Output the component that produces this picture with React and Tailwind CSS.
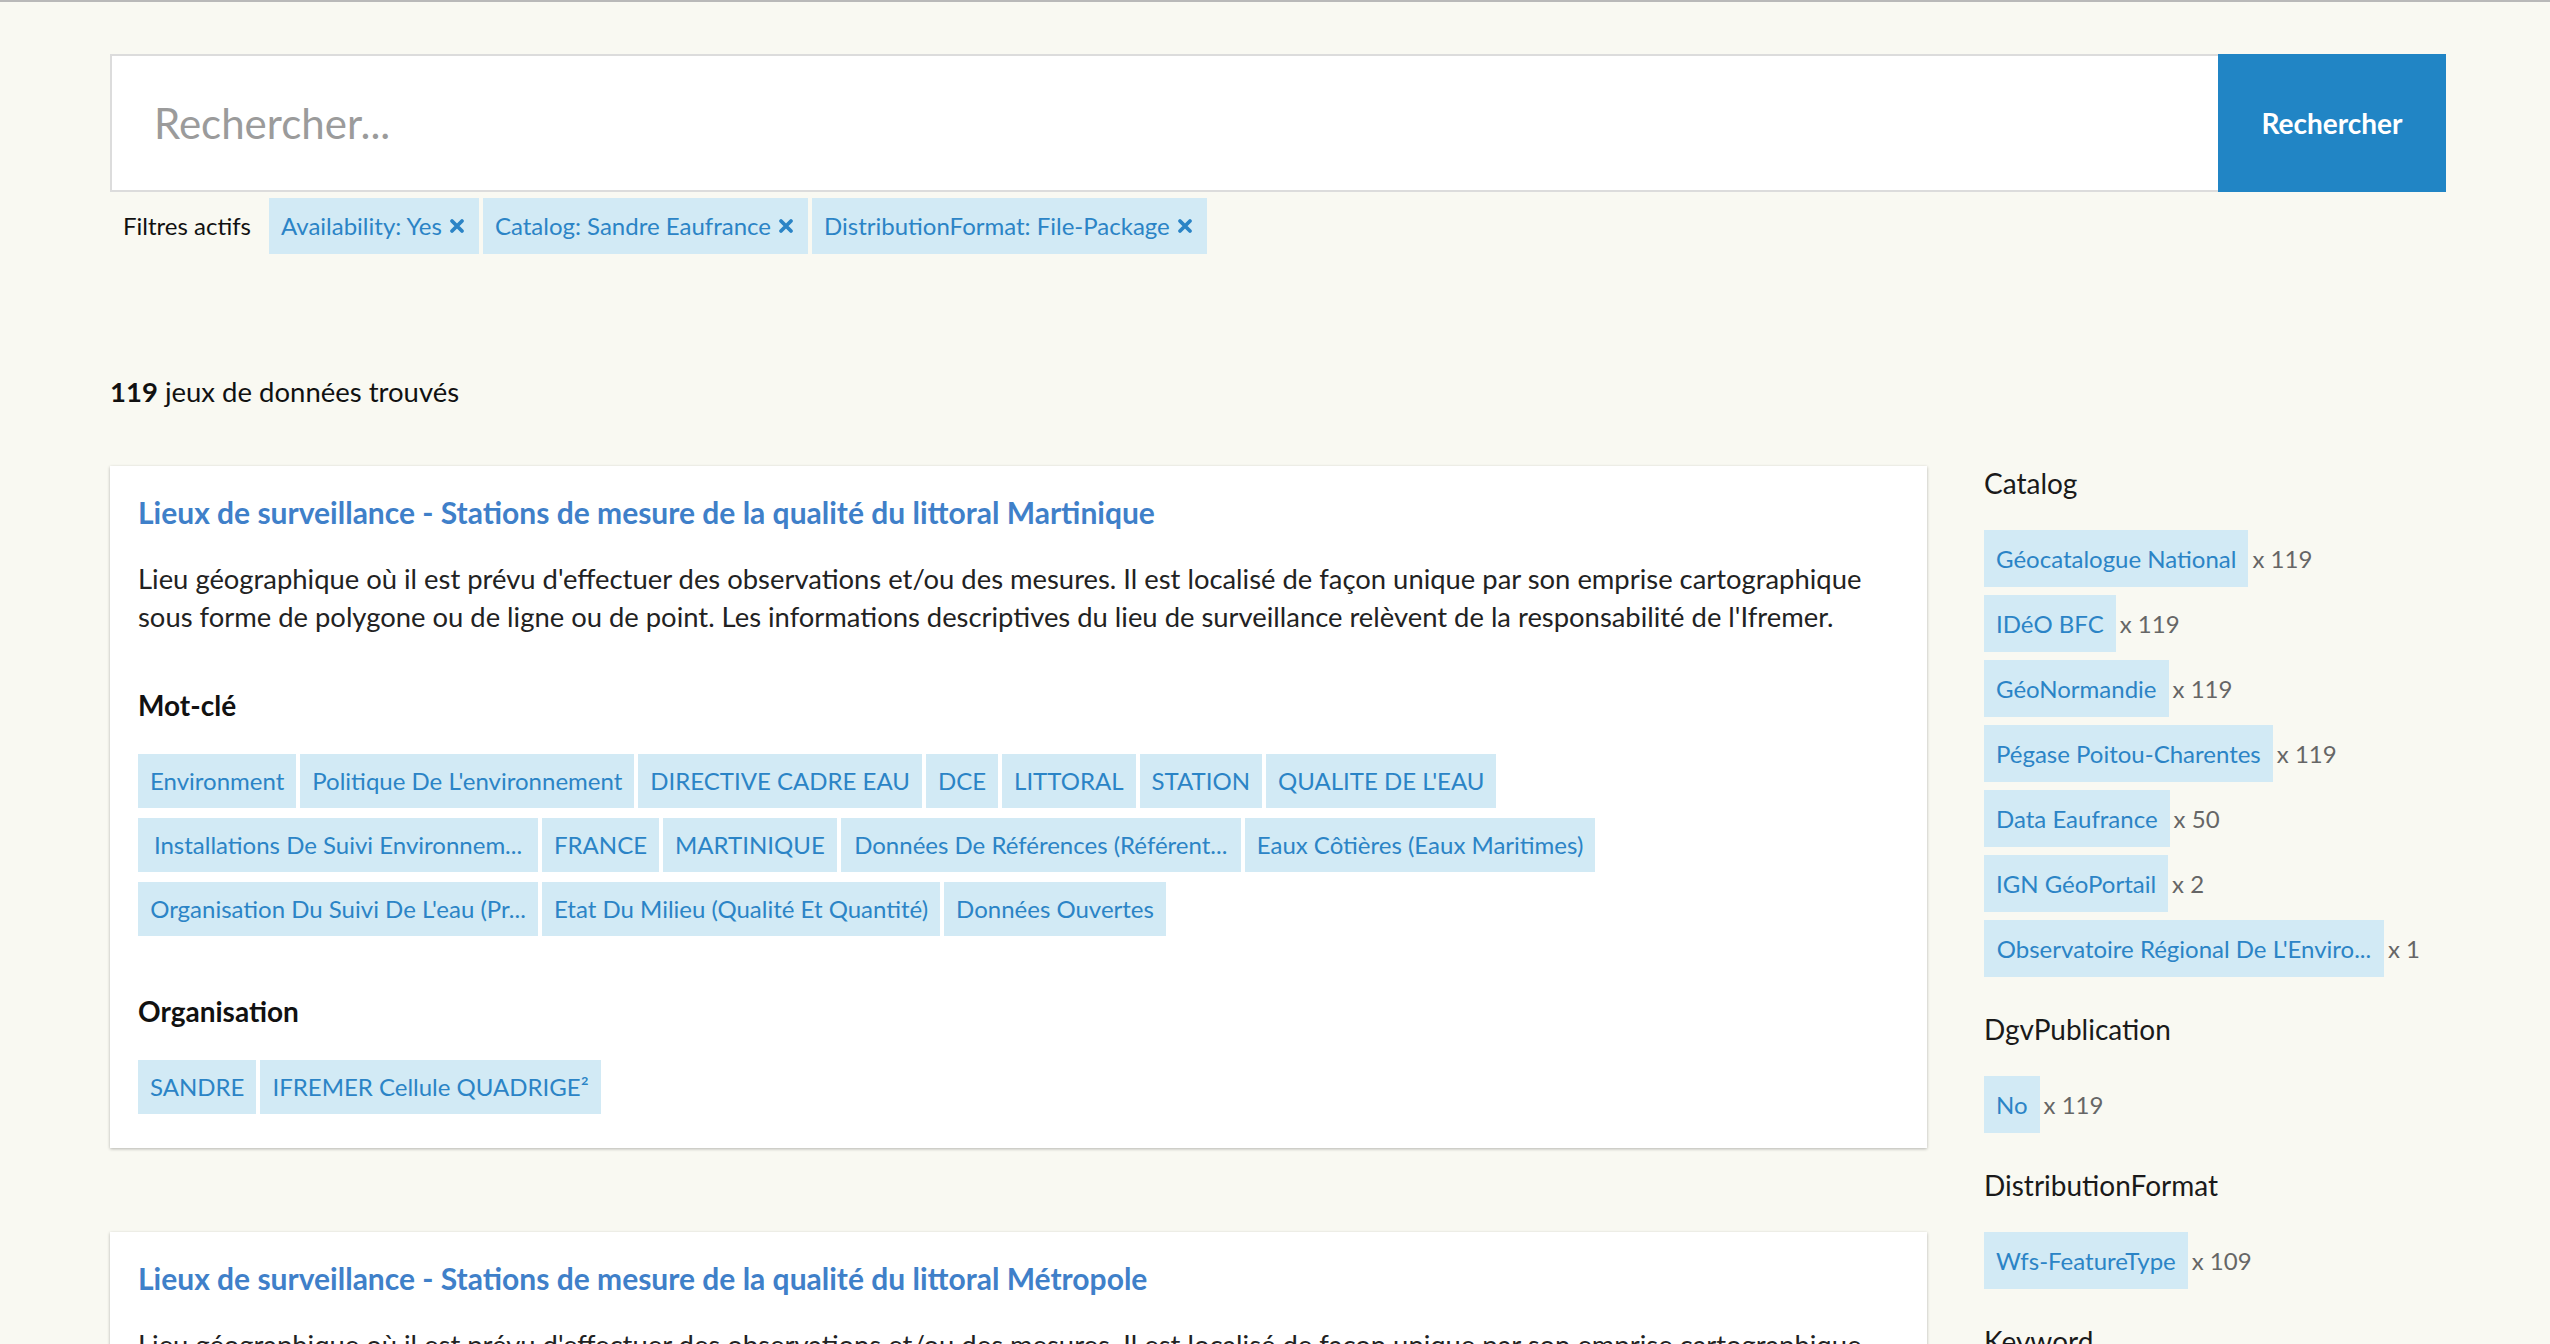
import { useState } from "react";

const filters = ["Availability: Yes", "Catalog: Sandre Eaufrance", "DistributionFormat: File-Package"];

const description =
  "Lieu géographique où il est prévu d'effectuer des observations et/ou des mesures. Il est localisé de façon unique par son emprise cartographique sous forme de polygone ou de ligne ou de point. Les informations descriptives du lieu de surveillance relèvent de la responsabilité de l'Ifremer.";

const keywords = [
  "Environment",
  "Politique De L'environnement",
  "DIRECTIVE CADRE EAU",
  "DCE",
  "LITTORAL",
  "STATION",
  "QUALITE DE L'EAU",
  "Installations De Suivi Environnem...",
  "FRANCE",
  "MARTINIQUE",
  "Données De Références (Référent...",
  "Eaux Côtières (Eaux Maritimes)",
  "Organisation Du Suivi De L'eau (Pr...",
  "Etat Du Milieu (Qualité Et Quantité)",
  "Données Ouvertes",
];

const datasets = [
  {
    id: 1,
    title: "Lieux de surveillance - Stations de mesure de la qualité du littoral Martinique",
    keywords,
    orgs: ["SANDRE", "IFREMER Cellule QUADRIGE²"],
  },
  {
    id: 2,
    title: "Lieux de surveillance - Stations de mesure de la qualité du littoral Métropole",
    keywords: keywords.map((k) => (k === "MARTINIQUE" ? "METROPOLE" : k)),
    orgs: ["SANDRE", "IFREMER Cellule QUADRIGE²"],
  },
];

const facets = [
  {
    name: "Catalog",
    items: [
      ["Géocatalogue National", 119],
      ["IDéO BFC", 119],
      ["GéoNormandie", 119],
      ["Pégase Poitou-Charentes", 119],
      ["Data Eaufrance", 50],
      ["IGN GéoPortail", 2],
      ["Observatoire Régional De L'Enviro...", 1],
    ],
  },
  { name: "DgvPublication", items: [["No", 119]] },
  { name: "DistributionFormat", items: [["Wfs-FeatureType", 109]] },
  { name: "Keyword", items: [["Environment", 119], ["DCE", 119], ["LITTORAL", 119]] },
];

function Times() {
  return (
    <svg width="16" height="16" viewBox="0 0 16 16" className="ml-[7px] shrink-0">
      <path d="M3 3 L13 13 M13 3 L3 13" stroke="#2b84c6" strokeWidth="3.8" strokeLinecap="round" />
    </svg>
  );
}

function Tag({ label }) {
  const cut = label.endsWith("...");
  return (
    <span
      className={
        "h-[54px] flex items-center bg-[#d2eaf5] text-[#2b84c6] text-[24px] whitespace-nowrap " +
        (cut ? "w-[400px] justify-center" : "px-[12px]")
      }
    >
      {label}
    </span>
  );
}

function DatasetCard({ data }) {
  return (
    <div className="bg-white shadow-[0_1px_3px_rgba(0,0,0,0.28)] px-[28px] pt-[28px] pb-[34px]">
      <a href="#" className="block text-[30px] leading-[36px] font-bold text-[#3f80c9]">
        {data.title}
      </a>
      <p className="mt-[30px] text-[27.4px] leading-[38px] text-[#222]">{description}</p>

      <h3 className="mt-[54px] text-[28px] leading-[31px] font-bold text-[#111]">Mot-clé</h3>
      <div className="mt-[33px] flex flex-wrap gap-x-[4px] gap-y-[10px]">
        {data.keywords.map((k) => (
          <Tag key={k} label={k} />
        ))}
      </div>

      <h3 className="mt-[60px] text-[28px] leading-[31px] font-bold text-[#111]">Organisation</h3>
      <div className="mt-[33px] flex flex-wrap gap-x-[4px] gap-y-[10px]">
        {data.orgs.map((o) => (
          <Tag key={o} label={o} />
        ))}
      </div>
    </div>
  );
}

export default function App() {
  const [query, setQuery] = useState("");

  return (
    <div className="min-h-screen bg-[#f9f9f2] border-t-2 border-[#b9b9b9] font-['Lato','Noto_Sans',sans-serif] overflow-hidden">
      <div className="ml-[110px] w-[2336px] pt-[52px] pb-[80px]">
        {/* search */}
        <div className="flex h-[138px]">
          <input
            value={query}
            onChange={(e) => setQuery(e.target.value)}
            placeholder="Rechercher..."
            className="flex-1 min-w-0 bg-white border-2 border-r-0 border-[#dcdcdc] pl-[42px] text-[42px] text-[#333] placeholder:text-[#9b9b9b] outline-none"
          />
          <button className="w-[228px] bg-[#2185c5] text-white text-[28px] font-bold">Rechercher</button>
        </div>

        {/* active filters */}
        <div className="mt-[6px] flex items-center">
          <span className="ml-[13px] mr-[18px] text-[24px] text-[#111]">Filtres actifs</span>
          <div className="flex gap-[4px]">
            {filters.map((f) => (
              <span key={f} className="h-[56px] pl-[12px] pr-[14px] flex items-center bg-[#d2eaf5] text-[#2b84c6] text-[24px]">
                {f}
                <Times />
              </span>
            ))}
          </div>
        </div>

        <div className="mt-[121px] text-[27.5px] leading-[34px] text-[#111]">
          <b className="font-bold">119</b> jeux de données trouvés
        </div>

        <div className="mt-[57px] flex items-start">
          <div className="w-[1817px] flex flex-col gap-[84px]">
            {datasets.map((d) => (
              <DatasetCard key={d.id} data={d} />
            ))}
          </div>

          <aside className="ml-[57px] w-[462px] flex flex-col gap-[35px]">
            {facets.map((g) => (
              <div key={g.name}>
                <h4 className="text-[28px] leading-[34px] text-[#1a1a1a]">{g.name}</h4>
                <div className="mt-[30px] flex flex-col items-start gap-[8px]">
                  {g.items.map(([label, count]) => (
                    <div key={label} className="flex items-center">
                      <span
                        className={
                          "h-[57px] flex items-center bg-[#d2eaf5] text-[#2b84c6] text-[24px] whitespace-nowrap " +
                          (label.endsWith("...") ? "w-[400px] justify-center" : "px-[12px]")
                        }
                      >
                        {label}
                      </span>
                      <span className="ml-[4px] text-[24px] text-[#666]">x {count}</span>
                    </div>
                  ))}
                </div>
              </div>
            ))}
          </aside>
        </div>
      </div>
    </div>
  );
}
